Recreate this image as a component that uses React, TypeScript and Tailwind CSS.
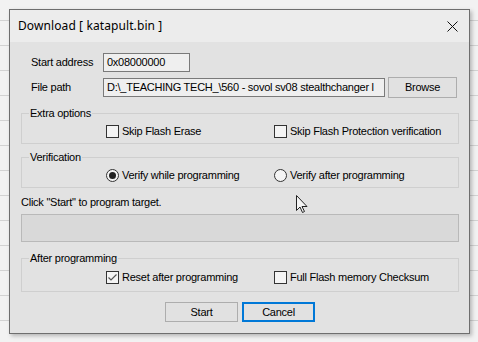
import React from "react";

const ui = { fontFamily: '"Liberation Sans", Arial, sans-serif' };
const title = { fontFamily: '"Noto Sans", "Open Sans", sans-serif' };

function Check({ checked }: { checked?: boolean }) {
  return (
    <span className="flex h-[13px] w-[13px] shrink-0 items-center justify-center border border-[#333333] bg-[#f4f4f4]">
      {checked && (
        <svg width="11" height="11" viewBox="0 0 11 11">
          <path d="M1.5 5.5 L4 8 L9.5 2.5" fill="none" stroke="#555" strokeWidth="1.2" />
        </svg>
      )}
    </span>
  );
}

function Radio({ checked }: { checked?: boolean }) {
  return (
    <span className="flex h-[13px] w-[13px] shrink-0 items-center justify-center rounded-full border border-[#333333] bg-[#f4f4f4]">
      {checked && <span className="h-[7px] w-[7px] rounded-full bg-[#222222]" />}
    </span>
  );
}

function Opt({ kind, checked, label, w }: { kind: "c" | "r"; checked?: boolean; label: string; w?: boolean }) {
  return (
    <div className={`flex items-center gap-[3px] ${w ? "w-[168px]" : ""}`}>
      {kind === "c" ? <Check checked={checked} /> : <Radio checked={checked} />}
      <span className="whitespace-nowrap leading-[13px]">{label}</span>
    </div>
  );
}

function Group({ legend, children, cls }: { legend: string; children: React.ReactNode; cls: string }) {
  return (
    <fieldset className={`border border-[#cfcfcf] p-0 ${cls}`}>
      <legend className="ml-[7px] px-[1px] leading-[13px]">{legend}</legend>
      <div className="flex pl-[84px] pt-[5px] pb-[5px]">{children}</div>
    </fieldset>
  );
}

export default function App() {
  return (
    <div
      className="relative h-[342px] w-[478px] overflow-hidden bg-[#f2f2f2] bg-[repeating-linear-gradient(to_bottom,transparent_0px,transparent_20px,#d2d2d2_20px,#d2d2d2_21px,transparent_21px,transparent_25px)] pl-[9px] pt-[9px]"
      style={ui}
    >
      <div className="flex h-[325px] w-[461px] flex-col border border-[#6e6e6e] bg-[#e2e2e2] shadow-[2px_2px_4px_rgba(0,0,0,0.25)]">
        {/* title bar */}
        <div className="flex h-[32px] shrink-0 items-center justify-between bg-[#ececec] pl-[8px] pr-[11px]">
          <span className="text-[12px] tracking-[0.1px] text-black" style={title}>
            Download [ katapult.bin ]
          </span>
          <svg width="11" height="11" viewBox="0 0 11 11">
            <path d="M0.5 0.5 L10.5 10.5 M10.5 0.5 L0.5 10.5" stroke="#111" strokeWidth="1" />
          </svg>
        </div>

        {/* body */}
        <div className="flex flex-col pl-[11px] pr-[10px] text-[11px] tracking-[-0.25px] text-black">
          <div className="mt-[11px] flex items-center pl-[10px]">
            <span className="w-[72px] leading-[13px]">Start address</span>
            <div className="flex h-[19px] w-[87px] items-center border border-[#7a7a7a] bg-[#efefef] pl-[3px] leading-[13px]">
              0x08000000
            </div>
          </div>
          <div className="mt-[5px] flex items-center pl-[10px]">
            <span className="w-[72px] leading-[13px]">File path</span>
            <div className="flex h-[19px] w-[282px] items-center overflow-hidden whitespace-nowrap border border-[#7a7a7a] bg-[#efefef] pl-[3px] leading-[13px]">
              D:\_TEACHING TECH_\560 - sovol sv08 stealthchanger l
            </div>
            <button className="ml-[3px] flex h-[21px] w-[69px] items-center justify-center border border-[#adadad] bg-[#e1e1e1] leading-[13px]">
              Browse
            </button>
          </div>

          <Group legend="Extra options" cls="mt-[9px]">
            <Opt kind="c" label="Skip Flash Erase" w />
            <Opt kind="c" label="Skip Flash Protection verification" />
          </Group>

          <Group legend="Verification" cls="mt-[7px]">
            <Opt kind="r" checked label="Verify while programming" w />
            <Opt kind="r" label="Verify after programming" />
          </Group>

          <div className="mt-[8px] leading-[13px]">Click "Start" to program target.</div>
          <div className="mt-[5px] h-[28px] border border-[#b9b9b9] bg-[#d9d9d9]" />

          <fieldset className="mt-[10px] border border-[#cfcfcf] p-0">
            <legend className="ml-[7px] px-[1px] leading-[13px]">After programming</legend>
            <div className="flex pl-[84px] pt-[6px] pb-[7px]">
              <Opt kind="c" checked label="Reset after programming" w />
              <Opt kind="c" label="Full Flash memory Checksum" />
            </div>
          </fieldset>

          <div className="mt-[10px] flex justify-center gap-[4px]">
            <button className="flex h-[20px] w-[73px] items-center justify-center border border-[#adadad] bg-[#e1e1e1] leading-[13px]">
              Start
            </button>
            <button className="flex h-[20px] w-[73px] items-center justify-center border-2 border-[#0078d7] bg-[#e1e1e1] leading-[13px]">
              Cancel
            </button>
          </div>
        </div>
      </div>

      {/* mouse cursor */}
      <svg className="absolute left-[296px] top-[195px]" width="12" height="19" viewBox="0 0 12 19">
        <path
          d="M0.5 0.5 L0.5 15.5 L4 12 L6.5 17.5 L8.5 16.5 L6 11.5 L11 11.5 Z"
          fill="#f4f4f4"
          stroke="#222"
          strokeWidth="1"
          strokeLinejoin="miter"
        />
      </svg>
    </div>
  );
}
